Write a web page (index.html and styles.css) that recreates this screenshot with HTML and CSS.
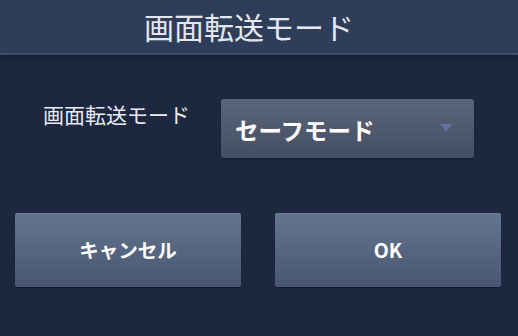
FILE: index.html
```html
<!DOCTYPE html>
<html lang="ja">
<head>
<meta charset="utf-8">
<link rel="stylesheet" href="styles.css">
</head>
<body>
<div class="dialog">
  <header class="titlebar">
    <h1 class="title">画面転送モード</h1>
  </header>
  <div class="content">
    <div class="row">
      <span class="label">画面転送モード</span>
      <div class="select">
        <span class="select-text">セーフモード</span>
        <span class="arrow"></span>
      </div>
    </div>
    <div class="buttons">
      <button class="btn">キャンセル</button>
      <button class="btn">OK</button>
    </div>
  </div>
</div>
</body>
</html>
```

FILE: styles.css
```css
html, body {
  margin: 0;
  padding: 0;
  background: #1d2740;
}
body {
  width: 518px;
  height: 336px;
  overflow: hidden;
  font-family: "Noto Sans CJK JP", "Noto Sans", sans-serif;
}
.dialog {
  display: flex;
  flex-direction: column;
  height: 336px;
}
.titlebar {
  height: 53px;
  background: #2e3e5a;
  border-bottom: 2px solid #3e4f6a;
  box-shadow: 0 2px 4px rgba(10, 16, 30, 0.5);
  display: flex;
  align-items: center;
  justify-content: center;
  padding-right: 20px;
}
.title {
  margin: 0;
  font-size: 30px;
  font-weight: 400;
  color: #e4e8ee;
  line-height: 1;
  letter-spacing: 0;
  transform: translateY(-1px);
}
.content {
  display: flex;
  flex-direction: column;
  padding: 44px 17px 0 15px;
}
.row {
  display: flex;
  align-items: flex-start;
  height: 60px;
}
.label {
  margin-left: 28px;
  margin-top: 2px;
  width: 150px;
  font-size: 21px;
  line-height: 26px;
  color: #e8ebf0;
}
.select {
  margin-left: 28px;
  width: 253px;
  height: 59px;
  box-sizing: border-box;
  border-radius: 3px;
  background: linear-gradient(#5b6579, #454f64);
  box-shadow: 0 1px 1px rgba(0,0,0,0.3);
  display: flex;
  align-items: center;
  padding: 0 22px 0 14px;
}
.select-text {
  flex: 1;
  font-size: 23.5px;
  font-weight: 700;
  color: #ffffff;
  line-height: 1;
  transform: translateY(2px);
}
.arrow {
  width: 0;
  height: 0;
  border-left: 6.5px solid transparent;
  border-right: 6.5px solid transparent;
  border-top: 8px solid #6371a2;
  margin-bottom: 2px;
}
.buttons {
  display: flex;
  gap: 34px;
  margin-top: 54px;
}
.btn {
  width: 226px;
  height: 74px;
  border: none;
  border-radius: 2px;
  background: linear-gradient(#64768f, #485671);
  box-shadow: 0 1px 1px rgba(0,0,0,0.4), inset 0 1px 0 rgba(255,255,255,0.08);
  color: #ffffff;
  font-family: "Noto Sans CJK JP", "Noto Sans", sans-serif;
  font-size: 19.5px;
  font-weight: 700;
  padding: 0;
  line-height: 1;
}
```
